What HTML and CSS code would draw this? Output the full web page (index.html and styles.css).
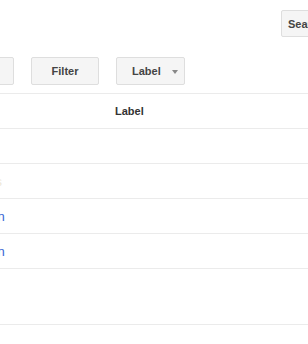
FILE: index.html
```html
<!DOCTYPE html>
<html lang="en">
<head>
  <meta charset="UTF-8" />
  <meta name="viewport" content="width=device-width, initial-scale=1.0">
  <title>Filters</title>
  <link rel="stylesheet" href="styles.css">
</head>
<body>
  <div class="page">
    <div class="top-bar">
      <button class="btn search-btn">Search</button>
    </div>

    <div class="toolbar">
      <button class="btn">Delete</button>
      <button class="btn">Filter</button>
      <button class="btn label-btn">Label <span class="arrow"></span></button>
    </div>

    <div class="list">
      <div class="row head">
        <div class="col-name"></div>
        <div class="col-label">Label</div>
      </div>
      <div class="row">
        <div class="col-name"></div>
        <div class="col-label"></div>
      </div>
      <div class="row">
        <div class="col-name faint">Notes</div>
        <div class="col-label"></div>
      </div>
      <div class="row">
        <div class="col-name link">Admin</div>
        <div class="col-label"></div>
      </div>
      <div class="row">
        <div class="col-name link">Admin</div>
        <div class="col-label"></div>
      </div>
      <div class="row tall">
        <div class="col-name"></div>
        <div class="col-label"></div>
      </div>
    </div>
  </div>
</body>
</html>
```

FILE: styles.css
```css
html, body {
  margin: 0;
  background: #fff;
  overflow: hidden;
}
body {
  font-family: "Liberation Sans", Arial, sans-serif;
  width: 308px;
  height: 344px;
}
.page {
  width: 308px;
}
.top-bar {
  display: flex;
  padding: 10px 0 0 281px;
  height: 27px;
}
.btn {
  box-sizing: border-box;
  height: 28px;
  min-width: 68px;
  padding: 0 14px;
  background: #f5f5f5;
  border: 1px solid #dedede;
  border-radius: 2px;
  color: #444;
  font-family: "Liberation Sans", Arial, sans-serif;
  font-size: 11px;
  font-weight: bold;
  white-space: nowrap;
  flex-shrink: 0;
}
.search-btn {
  height: 27px;
  padding: 0 6px;
  min-width: 70px;
  text-align: left;
}
.toolbar {
  display: flex;
  gap: 17px;
  margin: 20px 0 0 -54px;
}
.label-btn {
  width: 69px;
  padding: 0 0 0 15px;
  text-align: left;
}
.arrow {
  display: inline-block;
  width: 0;
  height: 0;
  margin-left: 8px;
  border-left: 3px solid transparent;
  border-right: 3px solid transparent;
  border-top: 4px solid #888;
  vertical-align: middle;
}
.list {
  margin-top: 8px;
  border-top: 1px solid #ebebeb;
}
.row {
  display: flex;
  align-items: center;
  height: 34px;
  border-bottom: 1px solid #ebebeb;
  font-size: 13px;
}
.row.head {
  font-size: 11px;
  font-weight: bold;
  color: #333;
}
.row.tall {
  height: 55px;
}
.col-name {
  width: 147px;
  margin-left: -32px;
  flex-shrink: 0;
  white-space: nowrap;
}
.link {
  color: #3a66d4;
}
.faint {
  color: #eee9d8;
}
.col-label {
  flex: 1;
}
```
